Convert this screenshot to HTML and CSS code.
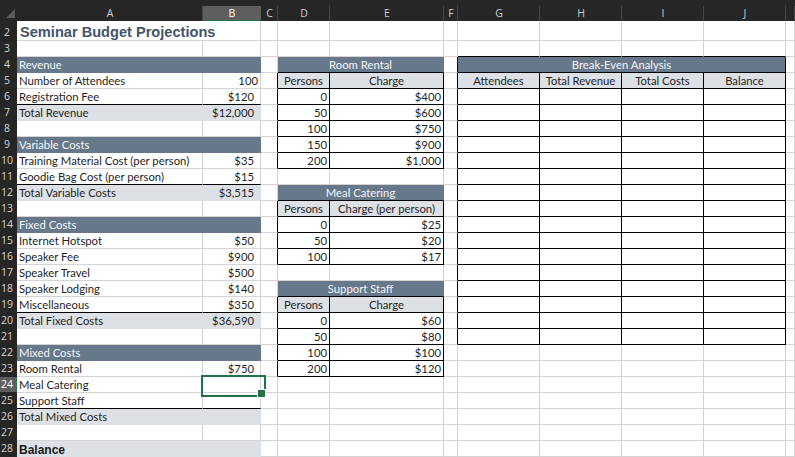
FILE: index.html
```html
<!DOCTYPE html>
<html>
<head>
<meta charset="utf-8">
<title>Seminar Budget Projections</title>
<link rel="stylesheet" href="styles.css">
</head>
<body>
<table class="sheet">
<colgroup>
<col class="c-rh"><col class="c-a"><col class="c-b"><col class="c-c"><col class="c-d"><col class="c-e"><col class="c-f"><col class="c-g"><col class="c-h"><col class="c-i"><col class="c-j"><col class="c-k">
</colgroup>
<thead>
<tr class="colhdr">
<th class="corner"><svg width="17" height="21" viewBox="0 0 17 21"><polygon points="15,9 15,18 6,18" fill="#5a5a5a"/></svg></th>
<th>A</th><th class="sel">B</th><th>C</th><th>D</th><th>E</th><th>F</th><th>G</th><th>H</th><th>I</th><th>J</th><th></th>
</tr>
</thead>
<tbody>
<tr class="r2"><th class="rh">2</th><td class="title" colspan="2">Seminar Budget Projections</td><td></td><td></td><td></td><td></td><td></td><td></td><td></td><td></td><td></td></tr>
<tr><th class="rh">3</th><td></td><td></td><td></td><td></td><td></td><td></td><td class="bb"></td><td class="bb"></td><td class="bb"></td><td class="bb"></td><td></td></tr>
<tr><th class="rh">4</th><td class="band" colspan="2">Revenue</td><td></td><td class="band ctr bb" colspan="2">Room Rental</td><td class="br"></td><td class="band ctr box" colspan="4">Break-Even Analysis</td><td></td></tr>
<tr><th class="rh">5</th><td>Number of Attendees</td><td class="num">100</td><td class="br"></td><td class="hd box">Persons</td><td class="hd box">Charge</td><td class="br"></td><td class="hd box">Attendees</td><td class="hd box">Total Revenue</td><td class="hd box">Total Costs</td><td class="hd box">Balance</td><td></td></tr>
<tr><th class="rh">6</th><td class="bb">Registration Fee</td><td class="cur bb">$120</td><td class="br"></td><td class="val box">0</td><td class="val box">$400</td><td class="br"></td><td class="box"></td><td class="box"></td><td class="box"></td><td class="box"></td><td></td></tr>
<tr><th class="rh">7</th><td class="tot">Total Revenue</td><td class="tot cur">$12,000</td><td class="br"></td><td class="val box">50</td><td class="val box">$600</td><td class="br"></td><td class="box"></td><td class="box"></td><td class="box"></td><td class="box"></td><td></td></tr>
<tr><th class="rh">8</th><td></td><td></td><td class="br"></td><td class="val box">100</td><td class="val box">$750</td><td class="br"></td><td class="box"></td><td class="box"></td><td class="box"></td><td class="box"></td><td></td></tr>
<tr><th class="rh">9</th><td class="band" colspan="2">Variable Costs</td><td class="br"></td><td class="val box">150</td><td class="val box">$900</td><td class="br"></td><td class="box"></td><td class="box"></td><td class="box"></td><td class="box"></td><td></td></tr>
<tr><th class="rh">10</th><td>Training Material Cost (per person)</td><td class="cur">$35</td><td class="br"></td><td class="val box">200</td><td class="val box">$1,000</td><td class="br"></td><td class="box"></td><td class="box"></td><td class="box"></td><td class="box"></td><td></td></tr>
<tr><th class="rh">11</th><td class="bb">Goodie Bag Cost (per person)</td><td class="cur bb">$15</td><td></td><td></td><td></td><td class="br"></td><td class="box"></td><td class="box"></td><td class="box"></td><td class="box"></td><td></td></tr>
<tr><th class="rh">12</th><td class="tot">Total Variable Costs</td><td class="tot cur">$3,515</td><td></td><td class="band ctr bb" colspan="2">Meal Catering</td><td class="br"></td><td class="box"></td><td class="box"></td><td class="box"></td><td class="box"></td><td></td></tr>
<tr><th class="rh">13</th><td></td><td></td><td class="br"></td><td class="hd box">Persons</td><td class="hd box">Charge (per person)</td><td class="br"></td><td class="box"></td><td class="box"></td><td class="box"></td><td class="box"></td><td></td></tr>
<tr><th class="rh">14</th><td class="band" colspan="2">Fixed Costs</td><td class="br"></td><td class="val box">0</td><td class="val box">$25</td><td class="br"></td><td class="box"></td><td class="box"></td><td class="box"></td><td class="box"></td><td></td></tr>
<tr><th class="rh">15</th><td>Internet Hotspot</td><td class="cur">$50</td><td class="br"></td><td class="val box">50</td><td class="val box">$20</td><td class="br"></td><td class="box"></td><td class="box"></td><td class="box"></td><td class="box"></td><td></td></tr>
<tr><th class="rh">16</th><td>Speaker Fee</td><td class="cur">$900</td><td class="br"></td><td class="val box">100</td><td class="val box">$17</td><td class="br"></td><td class="box"></td><td class="box"></td><td class="box"></td><td class="box"></td><td></td></tr>
<tr><th class="rh">17</th><td>Speaker Travel</td><td class="cur">$500</td><td></td><td></td><td></td><td class="br"></td><td class="box"></td><td class="box"></td><td class="box"></td><td class="box"></td><td></td></tr>
<tr><th class="rh">18</th><td>Speaker Lodging</td><td class="cur">$140</td><td></td><td class="band ctr bb" colspan="2">Support Staff</td><td class="br"></td><td class="box"></td><td class="box"></td><td class="box"></td><td class="box"></td><td></td></tr>
<tr><th class="rh">19</th><td class="bb">Miscellaneous</td><td class="cur bb">$350</td><td class="br"></td><td class="hd box">Persons</td><td class="hd box">Charge</td><td class="br"></td><td class="box"></td><td class="box"></td><td class="box"></td><td class="box"></td><td></td></tr>
<tr><th class="rh">20</th><td class="tot">Total Fixed Costs</td><td class="tot cur">$36,590</td><td class="br"></td><td class="val box">0</td><td class="val box">$60</td><td class="br"></td><td class="box"></td><td class="box"></td><td class="box"></td><td class="box"></td><td></td></tr>
<tr><th class="rh">21</th><td></td><td></td><td class="br"></td><td class="val box">50</td><td class="val box">$80</td><td class="br"></td><td class="box"></td><td class="box"></td><td class="box"></td><td class="box"></td><td></td></tr>
<tr><th class="rh">22</th><td class="band" colspan="2">Mixed Costs</td><td class="br"></td><td class="val box">100</td><td class="val box">$100</td><td></td><td></td><td></td><td></td><td></td><td></td></tr>
<tr><th class="rh">23</th><td>Room Rental</td><td class="cur">$750</td><td class="br"></td><td class="val box">200</td><td class="val box">$120</td><td></td><td></td><td></td><td></td><td></td><td></td></tr>
<tr><th class="rh sel">24</th><td>Meal Catering</td><td class="pick"></td><td></td><td></td><td></td><td></td><td></td><td></td><td></td><td></td><td></td></tr>
<tr><th class="rh">25</th><td class="bb">Support Staff</td><td class="bb"></td><td></td><td></td><td></td><td></td><td></td><td></td><td></td><td></td><td></td></tr>
<tr><th class="rh">26</th><td class="tot">Total Mixed Costs</td><td class="tot"></td><td></td><td></td><td></td><td></td><td></td><td></td><td></td><td></td><td></td></tr>
<tr><th class="rh">27</th><td></td><td></td><td></td><td></td><td></td><td></td><td></td><td></td><td></td><td></td><td></td></tr>
<tr><th class="rh">28</th><td class="tot bal">Balance</td><td class="tot"></td><td></td><td></td><td></td><td></td><td></td><td></td><td></td><td></td><td></td></tr>
</tbody>
</table>
</body>
</html>
```

FILE: styles.css
```css
* { box-sizing: border-box; }
html, body { margin: 0; padding: 0; background: #ffffff; }
body { width: 795px; height: 457px; overflow: hidden; }

.sheet {
  width: 795px;
  table-layout: fixed;
  border-collapse: separate;
  border-spacing: 0;
  font-family: Lato, "Liberation Sans", sans-serif;
  font-size: 11.3px;
  color: #1f1f1f;
}
.c-rh { width: 17px; }
.c-a { width: 186px; }
.c-b { width: 58px; }
.c-c { width: 17px; }
.c-d { width: 52px; }
.c-e { width: 114px; }
.c-f { width: 14px; }
.c-g, .c-h, .c-i, .c-j { width: 82px; }
.c-k { width: 9px; }

/* column headers */
.colhdr { height: 21px; }
.colhdr th {
  height: 21px;
  padding: 6px 0 0;
  font: 400 10.5px/15px "Open Sans", sans-serif;
  color: #cfcfcf;
  text-align: center;
  vertical-align: top;
  overflow: hidden;
  background: linear-gradient(#474747, #474747) right bottom / 1px 15px no-repeat, #262626;
}
.colhdr th.corner { padding: 0; background: #262626; }
.corner svg { display: block; }
.colhdr th.sel {
  color: #ffffff;
  background:
    linear-gradient(#217346, #217346) left bottom / 100% 1px no-repeat,
    linear-gradient(#5e5e5e, #5e5e5e) left bottom / 100% 15px no-repeat,
    #262626;
}

/* row headers */
.sheet tbody tr { height: 16px; }
.sheet tbody tr.r2 { height: 20px; }
.rh {
  height: 16px;
  padding: 0 3px 0 0;
  background: #262626;
  color: #d4d4d4;
  font: 400 10.5px/15px "Open Sans", sans-serif;
  text-align: center;
  vertical-align: bottom;
  border-bottom: 1px solid #262626;
  overflow: hidden;
  white-space: nowrap;
}
.rh.sel { background: #5e5e5e; color: #ffffff; box-shadow: inset -1px 0 0 #217346; }

/* cells */
.sheet td {
  height: 16px;
  padding: 0 2px;
  line-height: 15px;
  border-right: 1px solid #d4d4d4;
  border-bottom: 1px solid #d4d4d4;
  white-space: nowrap;
  overflow: hidden;
  vertical-align: bottom;
}
.sheet .r2 td, .sheet .r2 th { height: 20px; }

.sheet td.title {
  font: 700 14.6px/15px "Liberation Sans", Arial, sans-serif;
  color: #44546a;
  padding-left: 3px;
  overflow: visible;
}

.sheet td.band {
  background: #67788a;
  color: #f4f6f8;
  border-right-color: #67788a;
  border-bottom-color: #67788a;
}
.sheet td.tot {
  background: #dde1e6;
  border-right-color: #dde1e6;
  border-bottom-color: #dde1e6;
}
.sheet td.hd { background: #dde1e6; text-align: center; }
.sheet td.bal { font: 700 12px/12px "Liberation Sans", Arial, sans-serif; color: #1a1a1a; }

.sheet td.num { text-align: right; padding-right: 2px; }
.sheet td.cur { text-align: right; padding-right: 6px; }
.sheet td.val { text-align: right; padding-right: 2px; }
.sheet td.ctr { text-align: center; }

.sheet td.box { border-right-color: #000000; border-bottom-color: #000000; }
.sheet td.bb { border-bottom-color: #000000; }
.sheet td.br { border-right-color: #000000; }

/* active cell */
.sheet td.pick { position: relative; overflow: visible; }
.pick::before {
  content: "";
  position: absolute;
  left: -2px;
  top: -2px;
  width: 61px;
  height: 18px;
  border: 2px solid #217346;
}
.pick::after {
  content: "";
  position: absolute;
  left: 54px;
  top: 12px;
  width: 7px;
  height: 7px;
  background: #217346;
  border: 1px solid #ffffff;
}
```
